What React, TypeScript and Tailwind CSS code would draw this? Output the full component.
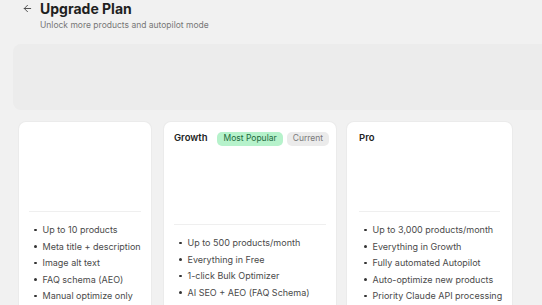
import { ArrowLeft } from "lucide-react";

interface Plan {
  name: string;
  width: string;
  pad: string;
  header: string;
  badges?: boolean;
  features: string[];
}

const plans: Plan[] = [
  {
    name: "",
    width: "w-[132px]",
    pad: "px-[10px]",
    header: "h-[90px]",
    features: [
      "Up to 10 products",
      "Meta title + description",
      "Image alt text",
      "FAQ schema (AEO)",
      "Manual optimize only",
    ],
  },
  {
    name: "Growth",
    width: "w-[172px]",
    pad: "px-[10px]",
    header: "h-[103px]",
    badges: true,
    features: [
      "Up to 500 products/month",
      "Everything in Free",
      "1-click Bulk Optimizer",
      "AI SEO + AEO (FAQ Schema)",
    ],
  },
  {
    name: "Pro",
    width: "w-[165px]",
    pad: "px-[12px]",
    header: "h-[90px]",
    features: [
      "Up to 3,000 products/month",
      "Everything in Growth",
      "Fully automated Autopilot",
      "Auto-optimize new products",
      "Priority Claude API processing",
    ],
  },
];

function PlanCard({ plan }: { plan: Plan }) {
  return (
    <div className={`${plan.width} shrink-0 rounded-[7px] bg-white shadow-[0_0_0_1px_#ebebeb] ${plan.pad}`}>
      <div className={`${plan.header} border-b border-[#efefef] pt-[10px]`}>
        {plan.name && (
          <div className="flex h-[14px] items-center gap-[4px] whitespace-nowrap">
            <span className="mr-[6px] text-[9.5px] font-semibold text-[#222]">{plan.name}</span>
            {plan.badges && (
              <>
                <span className="flex h-[14px] items-center rounded-[5px] bg-[#b6f2cb] px-[6px] text-[8.5px] text-[#1e6b3e]">
                  Most Popular
                </span>
                <span className="flex h-[14px] items-center rounded-[5px] bg-[#ebebeb] px-[6px] text-[8.5px] text-[#7a7a7a]">
                  Current
                </span>
              </>
            )}
          </div>
        )}
      </div>
      <ul className="pt-[10px] pb-[10px]">
        {plan.features.map((f) => (
          <li
            key={f}
            className="flex h-[16.5px] items-center pl-[5px] text-[9px] whitespace-nowrap text-[#4a4a4a]"
          >
            <span className="mr-[6px] h-[2.5px] w-[2.5px] shrink-0 rounded-full bg-[#333]" />
            {f}
          </li>
        ))}
      </ul>
    </div>
  );
}

export default function App() {
  return (
    <div className="h-[305px] w-[542px] overflow-hidden bg-[#f1f1f1] font-['Inter',sans-serif]">
      <div className="flex items-start pl-[22px]">
        <ArrowLeft className="mt-[3px] mr-[7px] h-[11px] w-[11px] text-[#444]" strokeWidth={2} />
        <div>
          <h1 className="text-[14px] leading-[17px] font-bold text-[#1f1f1f]">Upgrade Plan</h1>
          <p className="mt-[2.5px] text-[8.5px] leading-[11px] text-[#777]">
            Unlock more products and autopilot mode
          </p>
        </div>
      </div>

      <div className="mt-[13px] ml-[13px] h-[66px] rounded-l-[8px] bg-[#ececec]" />

      <div className="mt-[12px] flex items-start pl-[19px]">
        <PlanCard plan={plans[0]} />
        <div className="ml-[13px]">
          <PlanCard plan={plans[1]} />
        </div>
        <div className="ml-[11px]">
          <PlanCard plan={plans[2]} />
        </div>
      </div>
    </div>
  );
}
